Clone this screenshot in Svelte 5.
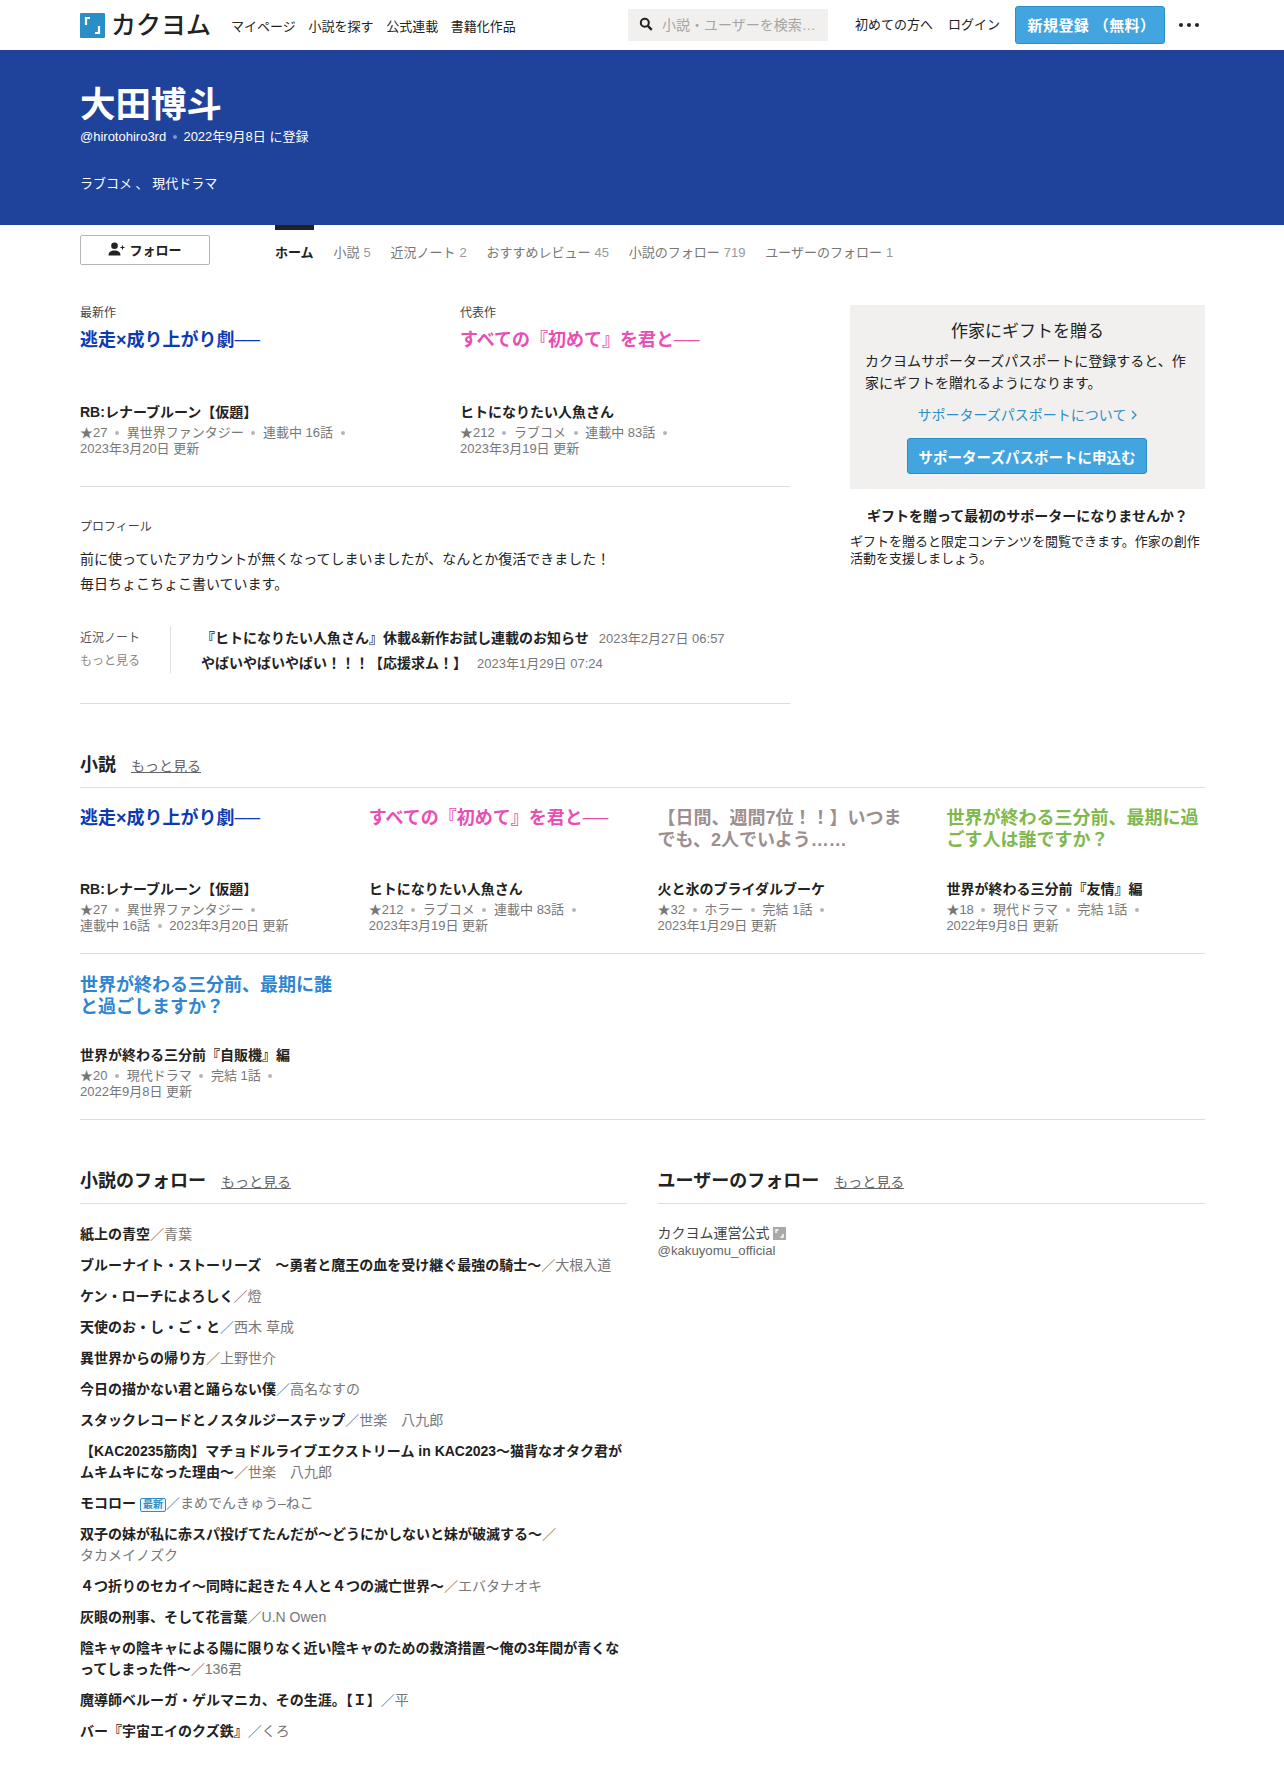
<script>
	const nav = ['マイページ', '小説を探す', '公式連載', '書籍化作品'];

	const tabs = [
		{ label: 'ホーム', count: null, active: true },
		{ label: '小説', count: 5 },
		{ label: '近況ノート', count: 2 },
		{ label: 'おすすめレビュー', count: 45 },
		{ label: '小説のフォロー', count: 719 },
		{ label: 'ユーザーのフォロー', count: 1 }
	];

	const latest = {
		catch: '逃走×成り上がり劇──',
		color: '#0b3bb3',
		title: 'RB:レナーブルーン【仮題】',
		meta: ['★27', '異世界ファンタジー', '連載中 16話', '2023年3月20日 更新']
	};
	const best = {
		catch: 'すべての『初めて』を君と──',
		color: '#e84fb4',
		title: 'ヒトになりたい人魚さん',
		meta: ['★212', 'ラブコメ', '連載中 83話', '2023年3月19日 更新']
	};
	const works = [
		latest,
		best,
		{
			catch: '【日間、週間7位！！】いつまでも、2人でいよう……',
			color: '#9b8f8f',
			title: '火と氷のブライダルブーケ',
			meta: ['★32', 'ホラー', '完結 1話', '2023年1月29日 更新']
		},
		{
			catch: '世界が終わる三分前、最期に過ごす人は誰ですか？',
			color: '#80b84e',
			title: '世界が終わる三分前『友情』編',
			meta: ['★18', '現代ドラマ', '完結 1話', '2022年9月8日 更新']
		},
		{
			catch: '世界が終わる三分前、最期に誰と過ごしますか？',
			color: '#2f86cf',
			title: '世界が終わる三分前『自販機』編',
			meta: ['★20', '現代ドラマ', '完結 1話', '2022年9月8日 更新']
		}
	];

	const notes = [
		{ title: '『ヒトになりたい人魚さん』休載&新作お試し連載のお知らせ', date: '2023年2月27日 06:57' },
		{ title: 'やばいやばいやばい！！！【応援求ム！】', date: '2023年1月29日 07:24' }
	];

	const follows = [
		{ t: '紙上の青空', a: '青葉' },
		{ t: 'ブルーナイト・ストーリーズ　～勇者と魔王の血を受け継ぐ最強の騎士～', a: '大根入道' },
		{ t: 'ケン・ローチによろしく', a: '燈' },
		{ t: '天使のお・し・ご・と', a: '西木 草成' },
		{ t: '異世界からの帰り方', a: '上野世介' },
		{ t: '今日の描かない君と踊らない僕', a: '高名なすの' },
		{ t: 'スタックレコードとノスタルジーステップ', a: '世楽　八九郎' },
		{ t: '【KAC20235筋肉】マチョドルライブエクストリーム in KAC2023～猫背なオタク君がムキムキになった理由～', a: '世楽　八九郎' },
		{ t: 'モコロー', a: 'まめでんきゅう–ねこ', fresh: true },
		{ t: '双子の妹が私に赤スパ投げてたんだが〜どうにかしないと妹が破滅する〜', a: 'タカメイノズク' },
		{ t: '４つ折りのセカイ〜同時に起きた４人と４つの滅亡世界〜', a: 'エバタナオキ' },
		{ t: '灰眼の刑事、そして花言葉', a: 'U.N Owen' },
		{ t: '陰キャの陰キャによる陽に限りなく近い陰キャのための救済措置〜俺の3年間が青くなってしまった件〜', a: '136君' },
		{ t: '魔導師ベルーガ・ゲルマニカ、その生涯。【Ｉ】', a: '平' },
		{ t: 'バー『宇宙エイのクズ鉄』', a: 'くろ' }
	];
</script>

{#snippet meta(items)}
	<p class="meta">
		{#each items as item, i}
			<span class="nb">{item}{#if i < items.length - 1}{' '}<span class="dot"></span>{/if}</span>{' '}
		{/each}
	</p>
{/snippet}

{#snippet work(w)}
	<h3 class="catch" style="color: {w.color}">{w.catch}</h3>
	<h4 class="work-title">{w.title}</h4>
	{@render meta(w.meta)}
{/snippet}

<header class="top">
	<a class="logo" href="#top">
		<svg width="25" height="25" viewBox="0 0 25 25">
			<rect width="25" height="25" rx="1" fill="#2a8fc9" />
			<path d="M6 12V5h4M19 13v7h-4" fill="none" stroke="#fff" stroke-width="2.2" />
		</svg>
		<span>カクヨム</span>
	</a>
	<nav class="main-nav">
		{#each nav as item}
			<a href="#top">{item}</a>
		{/each}
	</nav>
	<div class="search">
		<svg width="14" height="14" viewBox="0 0 14 14">
			<circle cx="5.8" cy="5.8" r="4" fill="none" stroke="#222" stroke-width="2" />
			<path d="M8.8 8.8l4 4" stroke="#222" stroke-width="2.4" />
		</svg>
		<span>小説・ユーザーを検索…</span>
	</div>
	<a class="plain first" href="#top">初めての方へ</a>
	<a class="plain login" href="#top">ログイン</a>
	<a class="signup" href="#top">新規登録 （無料）</a>
	<div class="dots"><i></i><i></i><i></i></div>
</header>

<section class="hero">
	<h1>大田博斗</h1>
	<p class="sub">@hirotohiro3rd <span class="dot light"></span> 2022年9月8日 に登録</p>
	<p class="genre">ラブコメ 、 現代ドラマ</p>
</section>

<div class="tabbar">
	<button class="follow">
		<svg width="17" height="14" viewBox="0 0 17 14">
			<circle cx="6.5" cy="3.8" r="3.3" fill="#222" />
			<path d="M0.5 13.5c0-3.6 2.4-5 6-5s6 1.4 6 5z" fill="#222" />
			<path d="M12.5 5.5h4M14.5 3.5v4" stroke="#222" stroke-width="1.1" />
		</svg>
		フォロー
	</button>
	<nav class="tabs">
		{#each tabs as tab}
			<a href="#top" class:active={tab.active}>
				{tab.label}{#if tab.count !== null}<em>{tab.count}</em>{/if}
			</a>
		{/each}
	</nav>
</div>

<main class="page">
	<div class="upper">
		<div class="left">
			<div class="pair">
				<div class="pick">
					<p class="label">最新作</p>
					{@render work(latest)}
				</div>
				<div class="pick">
					<p class="label">代表作</p>
					{@render work(best)}
				</div>
			</div>
			<div class="profile">
				<p class="label">プロフィール</p>
				<p class="intro">前に使っていたアカウントが無くなってしまいましたが、なんとか復活できました！<br />毎日ちょこちょこ書いています。</p>
			</div>
			<div class="notes">
				<div class="notes-side">
					<p>近況ノート</p>
					<a href="#top">もっと見る</a>
				</div>
				<ul>
					{#each notes as note}
						<li><b>{note.title}</b><time>{note.date}</time></li>
					{/each}
				</ul>
			</div>
		</div>
		<aside class="side">
			<div class="gift">
				<h2>作家にギフトを贈る</h2>
				<p>カクヨムサポーターズパスポートに登録すると、作家にギフトを贈れるようになります。</p>
				<a class="about" href="#top">サポーターズパスポートについて
					<svg width="6" height="10" viewBox="0 0 6 10"><path d="M1 1l4 4-4 4" fill="none" stroke="#2a8fc9" stroke-width="1.3" /></svg>
				</a>
				<a class="apply" href="#top">サポーターズパスポートに申込む</a>
			</div>
			<h3 class="first-gift">ギフトを贈って最初のサポーターになりませんか？</h3>
			<p class="gift-note">ギフトを贈ると限定コンテンツを閲覧できます。作家の創作活動を支援しましょう。</p>
		</aside>
	</div>

	<section class="novels">
		<div class="head">
			<h2>小説</h2>
			<a href="#top">もっと見る</a>
		</div>
		<div class="grid">
			{#each works as w}
				<article>
					{@render work(w)}
				</article>
			{/each}
		</div>
	</section>

	<div class="bottom">
		<section>
			<div class="head">
				<h2>小説のフォロー</h2>
				<a href="#top">もっと見る</a>
			</div>
			<ul class="follow-list">
				{#each follows as f}
					<li>
						<b>{f.t}</b>{#if f.fresh}<span class="badge">最新</span>{/if}<span class="author">／<span class="nb">{f.a}</span></span>
					</li>
				{/each}
			</ul>
		</section>
		<section>
			<div class="head">
				<h2>ユーザーのフォロー</h2>
				<a href="#top">もっと見る</a>
			</div>
			<div class="user">
				<p>カクヨム運営公式
					<svg width="13" height="13" viewBox="0 0 13 13">
						<rect width="13" height="13" fill="#a9a9a9" />
						<path d="M3 6V3h2.5M10 7v3H7.5" fill="none" stroke="#fff" stroke-width="1.4" />
					</svg>
				</p>
				<span>@kakuyomu_official</span>
			</div>
		</section>
	</div>
</main>

<style>
	:global(body) {
		font-family: 'Liberation Sans', 'Noto Sans CJK JP', sans-serif;
		color: #222;
		background: #fff;
	}

	a {
		color: inherit;
		text-decoration: none;
	}

	h1, h2, h3, h4, p, ul {
		margin: 0;
		padding: 0;
	}

	ul {
		list-style: none;
	}

	.top {
		height: 50px;
		display: flex;
		align-items: center;
		padding: 0 85px 0 80px;
		font-size: 13px;
	}

	.logo {
		display: flex;
		align-items: center;
		gap: 6px;
		width: 151px;
	}

	.logo span {
		font-size: 25px;
		font-weight: 500;
		line-height: 1;
		white-space: nowrap;
	}

	.main-nav {
		display: flex;
		gap: 12.7px;
		white-space: nowrap;
	}

	.search {
		margin-left: auto;
		width: 200px;
		height: 32px;
		margin-top: -1px;
		box-sizing: border-box;
		background: #f1f0ee;
		display: flex;
		align-items: center;
		gap: 9px;
		padding: 0 0 2px 11px;
		font-size: 14px;
		color: #a5a5a5;
		white-space: nowrap;
	}

	.first {
		margin-left: 27px;
		padding-bottom: 4px;
	}

	.login {
		margin-left: 15px;
		padding-bottom: 4px;
	}

	.signup {
		margin-left: 15px;
		width: 150px;
		height: 38px;
		margin-top: -1px;
		box-sizing: border-box;
		display: flex;
		align-items: center;
		justify-content: center;
		padding-left: 3px;
		background: #43a5df;
		border: 1px solid #2a8fc9;
		border-radius: 3px;
		color: #fff;
		font-size: 15px;
		font-weight: 700;
		letter-spacing: 0.4px;
		white-space: nowrap;
	}

	.dots {
		margin-left: 14px;
		display: flex;
		gap: 4px;
	}

	.dots i {
		width: 4px;
		height: 4px;
		border-radius: 50%;
		background: #222;
	}

	.hero {
		height: 175px;
		box-sizing: border-box;
		background: #1f429b;
		color: #fff;
		padding: 34px 80px 0;
	}

	.hero h1 {
		font-size: 35.5px;
		line-height: 42px;
	}

	.sub {
		font-size: 13px;
		line-height: 18px;
		margin-top: 2px;
	}

	.genre {
		font-size: 13px;
		line-height: 18px;
		margin-top: 29px;
	}

	.dot {
		display: inline-block;
		width: 4px;
		height: 4px;
		border-radius: 50%;
		background: #b5b5b5;
		margin: 0 4px;
		vertical-align: 2px;
	}

	.dot.light {
		background: #7f95cb;
		margin: 0 3px;
	}

	.tabbar {
		display: flex;
		padding: 0 80px;
		height: 55px;
	}

	.follow {
		margin-top: 10px;
		width: 130px;
		height: 30px;
		background: #fff;
		border: 1px solid #b5b5b5;
		border-radius: 2px;
		font: 700 13px 'Liberation Sans', 'Noto Sans CJK JP', sans-serif;
		color: #222;
		display: flex;
		align-items: center;
		justify-content: center;
		gap: 4px;
		padding: 0 0 2px;
	}

	.tabs {
		margin-left: 65px;
		display: flex;
		gap: 19.8px;
		font-size: 13px;
		color: #777;
	}

	.tabs a {
		padding-top: 14px;
		border-top: 5px solid transparent;
		line-height: 18px;
		white-space: nowrap;
	}

	.tabs a.active {
		border-top-color: #222;
		color: #222;
		font-weight: 700;
	}

	.tabs em {
		font-style: normal;
		color: #999;
		margin-left: 4px;
	}

	.page {
		padding: 25px 79px 60px 80px;
	}

	.upper {
		display: flex;
		justify-content: space-between;
	}

	.left {
		width: 710px;
	}

	.side {
		width: 355px;
	}

	.label {
		font-size: 12px;
		line-height: 16px;
		color: #444;
	}

	.pair {
		display: grid;
		grid-template-columns: 380px 1fr;
		padding-bottom: 29px;
		border-bottom: 1px solid #ddd;
	}

	.pick {
		max-width: 300px;
	}

	.pick .label {
		margin-bottom: 8px;
	}

	.catch {
		font-size: 18px;
		line-height: 22px;
		height: 71.5px;
		font-weight: 700;
	}

	.work-title {
		font-size: 14px;
		line-height: 20px;
		margin-top: 1px;
	}

	.meta {
		font-size: 13px;
		line-height: 16px;
		color: #777;
		margin-top: 3px;
	}

	.nb {
		white-space: nowrap;
	}

	.profile {
		padding-top: 32px;
	}

	.intro {
		font-size: 14px;
		line-height: 25px;
		margin-top: 12px;
	}

	.notes {
		display: flex;
		margin-top: 29px;
		padding-bottom: 27px;
		border-bottom: 1px solid #ddd;
	}

	.notes-side {
		width: 91px;
		height: 47px;
		border-right: 1px solid #ddd;
		font-size: 12px;
		color: #555;
		box-sizing: border-box;
	}

	.notes-side p {
		line-height: 18px;
		margin-top: 3px;
	}

	.notes-side a {
		display: block;
		color: #888;
		line-height: 18px;
		margin-top: 5px;
	}

	.notes ul {
		margin-left: 30px;
	}

	.notes li {
		font-size: 14px;
		line-height: 25px;
		white-space: nowrap;
	}

	.notes time {
		font-size: 13px;
		color: #777;
		margin-left: 10px;
	}

	.gift {
		background: #f1f0ee;
		height: 184px;
		box-sizing: border-box;
		padding: 16px 15px 0;
	}

	.gift h2 {
		font-size: 17px;
		line-height: 22px;
		font-weight: 400;
		text-align: center;
	}

	.gift p {
		font-size: 14px;
		line-height: 22px;
		margin-top: 7px;
	}

	.about {
		display: flex;
		align-items: center;
		justify-content: center;
		gap: 5px;
		color: #2a8fc9;
		font-size: 14px;
		line-height: 20px;
		margin-top: 11px;
	}

	.apply {
		display: flex;
		align-items: center;
		justify-content: center;
		width: 240px;
		height: 36px;
		box-sizing: border-box;
		margin: 13px 0 0 42px;
		background: #43a5df;
		border: 1px solid #2a8fc9;
		border-radius: 3px;
		color: #fff;
		font-size: 14.5px;
		font-weight: 700;
		white-space: nowrap;
	}

	.first-gift {
		font-size: 14px;
		line-height: 20px;
		text-align: center;
		margin-top: 17px;
	}

	.gift-note {
		font-size: 13px;
		line-height: 17px;
		margin-top: 7px;
	}

	.novels {
		margin-top: 48px;
	}

	.head {
		display: flex;
		align-items: baseline;
		gap: 15px;
		height: 36px;
		box-sizing: border-box;
		border-bottom: 1px solid #ddd;
	}

	.head h2 {
		font-size: 18px;
		line-height: 26px;
	}

	.head a {
		font-size: 14px;
		color: #666;
		text-decoration: underline;
	}

	.grid {
		display: grid;
		grid-template-columns: repeat(4, 253px);
		column-gap: 35.8px;
		border-bottom: 1px solid #ddd;
	}

	.grid article {
		padding-top: 19px;
		height: 165px;
		box-sizing: border-box;
		position: relative;
	}

	.grid article:nth-child(5) {
		padding-top: 21px;
		height: 166px;
	}

	.grid article:nth-child(5) .catch {
		height: 70.5px;
	}

	.grid article:nth-child(5)::before {
		content: '';
		position: absolute;
		top: 0;
		left: 0;
		width: 1125px;
		height: 1px;
		background: #ddd;
	}

	.bottom {
		display: grid;
		grid-template-columns: 547px 547.5px;
		column-gap: 30.5px;
		margin-top: 48px;
	}

	.follow-list {
		margin-top: 20px;
	}

	.follow-list li {
		font-size: 14px;
		line-height: 21px;
		margin-bottom: 10px;
	}

	.author {
		color: #777;
	}

	.badge {
		display: inline-block;
		border: 1px solid #2a8fc9;
		border-radius: 2px;
		background: #eef7fc;
		color: #2a8fc9;
		font-size: 10px;
		font-weight: 700;
		line-height: 12px;
		padding: 0 2px;
		margin-left: 4px;
		vertical-align: 0;
	}

	.user {
		margin-top: 19px;
	}

	.user p {
		font-size: 14px;
		line-height: 20px;
		color: #444;
	}

	.user svg {
		vertical-align: -2px;
	}

	.user span {
		font-size: 13.2px;
		line-height: 16px;
		color: #666;
		display: block;
	}
</style>
